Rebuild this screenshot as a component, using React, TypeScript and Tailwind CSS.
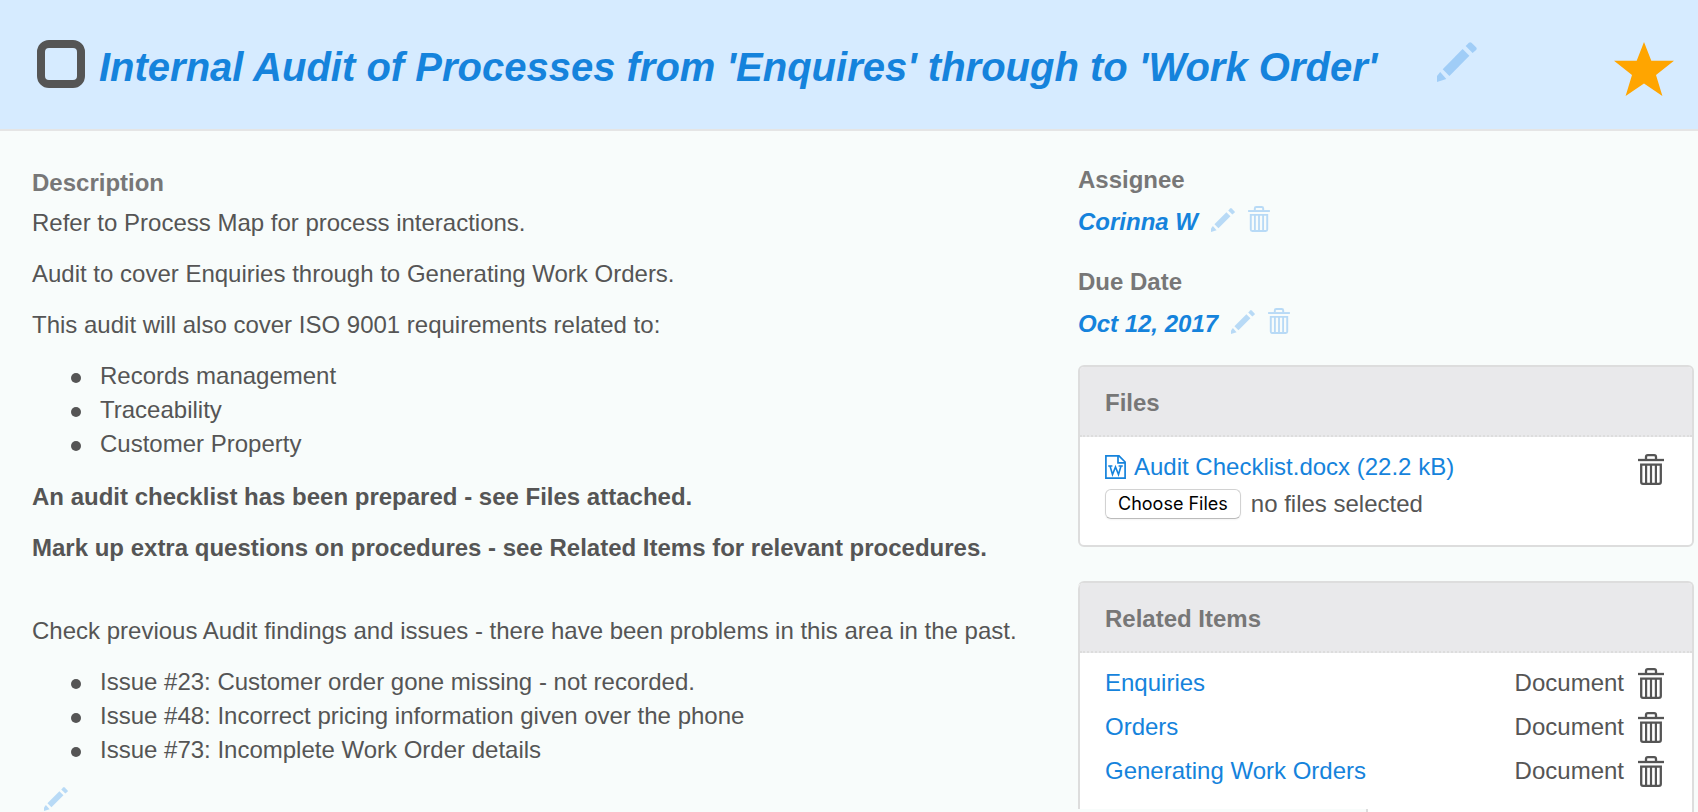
import { useState } from "react";

function Pencil({ className }: { className: string }) {
  return (
    <svg viewBox="0 0 40 40" fill="currentColor" className={className} aria-hidden="true">
      <path d="M5.7 27.2 25.6 7.1 32.4 13.8 12.4 33.9z" />
      <path d="M28.7 4 31.9 .8Q33.2 -.4 34.5 .8L39.1 5.3Q40.3 6.6 39.1 7.9L35.6 10.9z" />
      <path d="M3.2 30 9.3 37 0 40V34z" />
    </svg>
  );
}

function Trash({ className }: { className: string }) {
  return (
    <svg viewBox="0 0 26 31" fill="none" stroke="currentColor" strokeWidth="2.3" className={className} aria-hidden="true">
      <path d="M8 5.5V3Q8 1.2 9.8 1.2H16.2Q18 1.2 18 3V5.5" />
      <path d="M0 6H26" />
      <path d="M3.2 10.6H22.8V28Q22.8 29.8 21 29.8H5Q3.2 29.8 3.2 28z" />
      <path d="M8.1 10V29.6M13 10V29.6M17.9 10V29.6" strokeWidth="2.2" />
    </svg>
  );
}

function WordFile() {
  return (
    <svg viewBox="0 0 21 24" fill="none" stroke="currentColor" strokeWidth="1.7" className="h-6 w-[21px] shrink-0" aria-hidden="true">
      <path d="M.9 .9H14L20.1 7V23.1H.9z" />
      <path d="M13 .9V7.8H20.1" />
      <path d="M3.2 11H7.4M13.6 11H17.8" strokeWidth="1.4" />
      <path d="M5 11 7.5 19.5 10.5 12 13.5 19.5 16 11" strokeWidth="1.6" />
    </svg>
  );
}

function Field({ label, value }: { label: string; value: string }) {
  return (
    <section>
      <h2 className="font-bold text-[#777]">{label}</h2>
      <div className="mt-2 flex items-center">
        <span className="font-bold text-[#1583dc] italic">{value}</span>
        <button type="button" aria-label={`Edit ${label}`} className="mb-1 ml-[13px] text-[#b8daf6]">
          <Pencil className="size-6" />
        </button>
        <button type="button" aria-label={`Clear ${label}`} className="mb-1.5 ml-[13px] text-[#b8daf6]">
          <Trash className="h-[26px] w-[22px]" />
        </button>
      </div>
    </section>
  );
}

const related = ["Enquiries", "Orders", "Generating Work Orders"];
const scope = ["Records management", "Traceability", "Customer Property"];
const issues = [
  "Issue #23: Customer order gone missing - not recorded.",
  "Issue #48: Incorrect pricing information given over the phone",
  "Issue #73: Incomplete Work Order details",
];

function Bullets({ items }: { items: string[] }) {
  return (
    <ul className="mt-[17px]">
      {items.map((t) => (
        <li key={t} className="flex items-center pl-[39px]">
          <span className="mt-1 mr-[19px] size-[10px] rounded-full bg-[#555]" />
          {t}
        </li>
      ))}
    </ul>
  );
}

function PanelTitle({ children }: { children: string }) {
  return (
    <h2 className="rounded-t border-b-2 border-dotted border-[#ddd] bg-[#e9e9eb] px-[25px] pt-[19px] pb-[15px] font-bold text-[#777]">
      {children}
    </h2>
  );
}

export default function App() {
  const [done, setDone] = useState(false);
  return (
    <div className="min-h-screen bg-[#f8fcfb] font-['Liberation_Sans',Arial,sans-serif] text-2xl leading-[34px] text-[#555]">
      <header className="flex h-[131px] items-center border-b-2 border-[#e5e5e5] bg-[#d6ebff] pr-6 pl-[37px]">
        <input
          type="checkbox"
          aria-label="Mark as complete"
          checked={done}
          onChange={(e) => setDone(e.target.checked)}
          className="mb-0.5 size-12 appearance-none rounded-xl border-8 border-[#555] checked:bg-[#555]"
        />
        <h1 className="ml-[14px] pt-1 text-[40px] leading-[50px] font-bold whitespace-nowrap text-[#1583dc] italic">
          Internal Audit of Processes from 'Enquires' through to 'Work Order'
        </h1>
        <button type="button" aria-label="Edit title" className="mb-1.5 ml-[60px] text-[#a0cdf7]">
          <Pencil className="size-10" />
        </button>
        <button type="button" aria-label="Favourite" className="mt-2 ml-auto text-[#ffa500]">
          <svg viewBox="0 0 60 54" fill="currentColor" className="h-[54px] w-[60px]" aria-hidden="true">
            <path d="M30 0 37.3 18.8H60L42 33 48.4 54 30 41.5 11.6 54 18 33 0 18.8H22.7z" />
          </svg>
        </button>
      </header>
      <main className="flex justify-between pr-1 pl-8">
        <section className="pt-[35px]">
          <h2 className="font-bold text-[#777]">Description</h2>
          <p className="mt-[6px]">Refer to Process Map for process interactions.</p>
          <p className="mt-[17px]">Audit to cover Enquiries through to Generating Work Orders.</p>
          <p className="mt-[17px]">This audit will also cover ISO 9001 requirements related to:</p>
          <Bullets items={scope} />
          <p className="mt-[19px] font-bold">An audit checklist has been prepared - see Files attached.</p>
          <p className="mt-[17px] font-bold">Mark up extra questions on procedures - see Related Items for relevant procedures.</p>
          <p className="mt-[49px]">Check previous Audit findings and issues - there have been problems in this area in the past.</p>
          <Bullets items={issues} />
          <button type="button" aria-label="Edit description" className="mt-5 ml-3 block text-[#b8daf6]">
            <Pencil className="size-6" />
          </button>
        </section>
        <aside className="w-[616px] shrink-0 pt-8">
          <div className="flex flex-col gap-[26px]">
            <Field label="Assignee" value="Corinna W" />
            <Field label="Due Date" value="Oct 12, 2017" />
          </div>
          <section className="mt-6 rounded-md border-2 border-[#ddd] bg-white">
            <PanelTitle>Files</PanelTitle>
            <div className="flex items-start justify-between pt-[13px] pr-7 pb-6 pl-[25px]">
              <div>
                <a href="#audit-checklist" className="flex items-center gap-2 text-[#1583dc]">
                  <WordFile />
                  Audit Checklist.docx (22.2 kB)
                </a>
                <div className="mt-[3px] flex items-center gap-[10px]">
                  <button
                    type="button"
                    className="h-[30px] rounded-md border border-[#d2d2d2] border-b-[#bbb] px-3 font-['Inter',sans-serif] text-lg leading-7 text-black shadow-xs"
                  >
                    Choose Files
                  </button>
                  <span>no files selected</span>
                </div>
              </div>
              <button type="button" aria-label="Delete file" className="mt-1">
                <Trash className="h-[31px] w-[26px]" />
              </button>
            </div>
          </section>
          <section className="mt-[34px] rounded-t-md border-t-2 border-r-2 border-[#ddd] bg-white">
            <div className="rounded-tl-md border-l-2 border-[#ddd] pb-4">
              <PanelTitle>Related Items</PanelTitle>
              <ul className="pt-2 pr-7 pl-[25px]">
                {related.map((t) => (
                  <li key={t} className="flex h-11 items-center">
                    <a href="#related" className="text-[#1583dc]">{t}</a>
                    <span className="ml-auto">Document</span>
                    <button type="button" aria-label={`Remove ${t}`} className="ml-[14px]">
                      <Trash className="h-[31px] w-[26px]" />
                    </button>
                  </li>
                ))}
              </ul>
            </div>
            <div className="h-[3px] w-[290px] border-r-2 border-[#ddd] bg-[#f8fcfb]" />
          </section>
        </aside>
      </main>
    </div>
  );
}
